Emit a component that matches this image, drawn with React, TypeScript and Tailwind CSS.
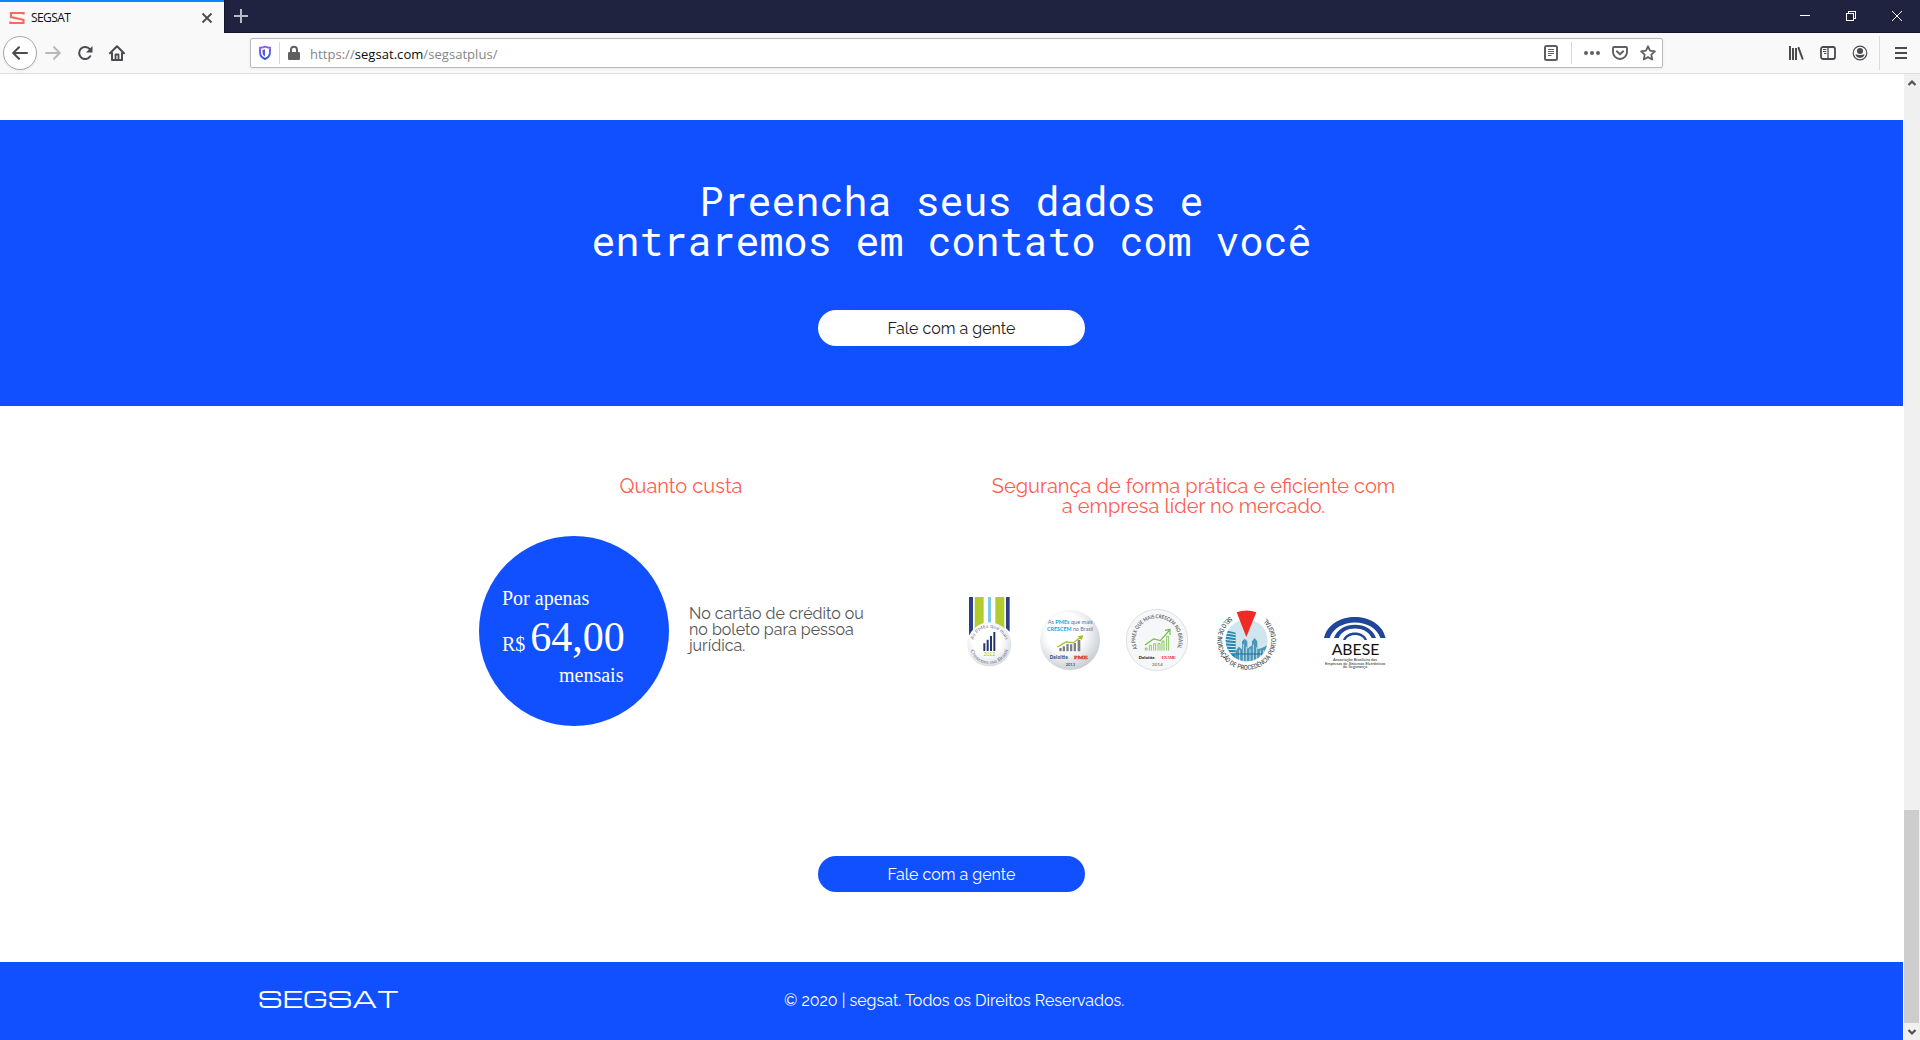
import React from "react";

const SANS = "font-['Raleway','Lato',sans-serif]";

function TabStrip() {
  return (
    <div className="flex h-[33px] bg-[#20233f]">
      <div className="flex h-full w-[224px] items-center border-t-2 border-[#0a84ff] bg-[#f9f9fa] pl-[9px] pr-[11px]">
        <svg width="16" height="16" viewBox="0 0 16 16" fill="none" stroke="#fb6a60" strokeWidth="2.2">
          <path d="M14.6 4.4V3H2v4l12.4 2.8V13H1.4v-1.6" />
        </svg>
        <span className="ml-[6px] flex-1 font-['Open_Sans',sans-serif] text-[12px] leading-[16px] tracking-[-0.6px] text-[#0c0c0d]">
          SEGSAT
        </span>
        <svg width="12" height="12" viewBox="0 0 12 12" stroke="#4a4a4f" strokeWidth="1.8">
          <path d="M1.5 1.5l9 9M10.5 1.5l-9 9" />
        </svg>
      </div>
      <div className="flex flex-1 items-center border-b border-l border-[#14162d] pl-[9px] pr-[17px]">
        <svg width="14" height="14" viewBox="0 0 14 14" stroke="#b9b9c6" strokeWidth="2">
          <path d="M7 0v14M0 7h14" />
        </svg>
        <div className="ml-auto flex items-center gap-[34px]">
          <svg width="12" height="12" viewBox="0 0 12 12" stroke="#fff" shapeRendering="crispEdges">
            <path d="M1 5.5h10" />
          </svg>
          <svg width="12" height="12" viewBox="0 0 12 12" fill="none" stroke="#fff" shapeRendering="crispEdges">
            <path d="M1.5 3.5h7v7h-7zM3.5 3V1.5h7v7H9" />
          </svg>
          <svg width="12" height="12" viewBox="0 0 12 12" stroke="#fff">
            <path d="M1 1l10 10M11 1L1 11" />
          </svg>
        </div>
      </div>
    </div>
  );
}

function AddressBar() {
  return (
    <div className="ml-[125px] flex h-[30px] w-[1413px] shrink-0 items-center rounded-[2px] border border-[#b9b9bb] bg-white pl-[7px] pr-[6px] shadow-[0_1px_3px_rgba(0,0,0,0.06)]">
      <svg width="14" height="16" viewBox="0 0 14 16" fill="none">
        <defs>
          <linearGradient id="shield" x1="0" y1="0" x2="0" y2="1">
            <stop offset="0" stopColor="#9059ff" />
            <stop offset="1" stopColor="#2a5bd0" />
          </linearGradient>
        </defs>
        <path d="M7 1.6c1.8.8 3.4 1 5 1.2V7c0 3.600-1.700 5.700-5 7C3.700 12.700 2 10.600 2 7V2.800c1.600-.2 3.200-.4 5-1.200z" stroke="url(#shield)" strokeWidth="1.9" />
        <path d="M7 4.200c-.9.4-1.700.5-2.500.6V7c0 2.200.8 3.500 2.500 4.600z" fill="#5a55e8" />
      </svg>
      <div className="ml-[7px] h-[22px] w-px bg-[#d7d7db]" />
      <svg className="ml-[8px]" width="12" height="16" viewBox="0 0 12 16">
        <path d="M3 8V4.800a3 3 0 0 1 6 0V8" fill="none" stroke="#5f5f61" strokeWidth="2" />
        <rect x="0" y="7" width="12" height="8" rx="1.300" fill="#5f5f61" />
      </svg>
      <span className="ml-[10px] whitespace-pre pt-[2px] font-['Open_Sans',sans-serif] text-[13px] leading-[18px] tracking-[0.05px] text-[#858587]">
        https://<span className="text-[#0c0c0d]">segsat.com</span>/segsatplus/
      </span>
      <div className="ml-auto flex items-center">
        <svg width="14" height="16" viewBox="0 0 14 16" fill="none" stroke="#5f5f61">
          <rect x="1" y="1" width="12" height="14" rx="1.500" strokeWidth="2" />
          <path d="M4 4.500h6M4 6.500h6M4 8.500h6M4 10.500h3.500" />
        </svg>
        <div className="ml-[13px] h-[22px] w-px bg-[#d7d7db]" />
        <svg className="ml-[12px]" width="16" height="16" viewBox="0 0 16 16" fill="#5f5f61">
          <circle cx="2" cy="8" r="2" />
          <circle cx="8" cy="8" r="2" />
          <circle cx="14" cy="8" r="2" />
        </svg>
        <svg className="ml-[12px]" width="16" height="16" viewBox="0 0 16 16" fill="none" stroke="#5f5f61" strokeWidth="1.900" strokeLinecap="round" strokeLinejoin="round">
          <path d="M2 2h12a1 1 0 0 1 1 1v4a7 7 0 0 1-14 0V3a1 1 0 0 1 1-1z" />
          <path d="M4.800 6.300L8 9.300l3.200-3" />
        </svg>
        <svg className="ml-[12px]" width="16" height="16" viewBox="0 0 16 16" fill="none" stroke="#5f5f61" strokeWidth="1.800" strokeLinejoin="round">
          <path d="M8 1.300l2 4.400 4.900.6-3.600 3.300.9 4.900L8 12.100l-4.200 2.400.9-4.900L1.100 6.300 6 5.700z" />
        </svg>
      </div>
    </div>
  );
}

function Toolbar() {
  return (
    <div className="flex h-[41px] items-center border-b border-[#dcdcdd] bg-[#f9f9fa] pb-px pl-[3px] pr-[12px]">
      <div className="flex size-[34px] shrink-0 items-center justify-center rounded-full border border-[#a9a9ab] bg-white shadow-[0_1px_2px_rgba(0,0,0,0.08)]">
        <svg width="16" height="16" viewBox="0 0 16 16" fill="none" stroke="#4a4a4f" strokeWidth="2" strokeLinecap="round" strokeLinejoin="round">
          <path d="M15 8H1.500M7 2.200L1.200 8 7 13.800" />
        </svg>
      </div>
      <svg className="ml-[8px] shrink-0" width="16" height="16" viewBox="0 0 16 16" fill="none" stroke="#b9b9bb" strokeWidth="2" strokeLinecap="round" strokeLinejoin="round">
        <path d="M1 8h13.500M9 2.200L14.800 8 9 13.800" />
      </svg>
      <svg className="ml-[16px] shrink-0" width="16" height="16" viewBox="0 0 16 16" fill="none" stroke="#4a4a4f" strokeWidth="2">
        <path d="M13.200 11.200A6 6 0 1 1 12.800 4.200" strokeLinecap="round" />
        <path d="M15.500 1v6.500H9z" fill="#4a4a4f" stroke="none" />
      </svg>
      <svg className="ml-[16px] shrink-0" width="16" height="16" viewBox="0 0 16 16" fill="none" stroke="#4a4a4f" strokeWidth="2" strokeLinecap="round" strokeLinejoin="round">
        <path d="M1 8.300L8 1.300l7 7M3 8v7h10V8" />
        <path d="M6.500 14V9.500h3V14" strokeWidth="1.800" />
      </svg>
      <AddressBar />
      <div className="ml-auto flex items-center">
        <svg width="16" height="16" viewBox="0 0 16 16" fill="none" stroke="#4a4a4f" strokeWidth="2">
          <path d="M2 1v14M5 3v12M8 3v12M10.300 2.200l4.500 12.300" />
        </svg>
        <svg className="ml-[16px]" width="16" height="16" viewBox="0 0 16 16" fill="none" stroke="#4a4a4f" strokeWidth="1.800">
          <rect x="1" y="2" width="14" height="12" rx="2" />
          <path d="M8 2v12" strokeWidth="1.300" />
          <path d="M3 4.500h3.300M3 6.500h3.300M4 8.500h2.300" strokeWidth="1" />
        </svg>
        <svg className="ml-[16px]" width="16" height="16" viewBox="0 0 16 16">
          <circle cx="8" cy="8" r="6.800" fill="none" stroke="#4a4a4f" strokeWidth="1.200" />
          <circle cx="8" cy="6" r="3" fill="#4a4a4f" />
          <path d="M3.300 9.600C4.500 9 5.500 9.900 8 9.900s3.500-.9 4.700-.3c-.6 2-2.300 3.300-4.700 3.300s-4.100-1.300-4.700-3.300z" fill="#4a4a4f" />
        </svg>
        <div className="ml-[11px] h-[34px] w-px bg-[#dcdcdd]" />
        <svg className="ml-[14px]" width="14" height="14" viewBox="0 0 14 14" stroke="#4a4a4f" strokeWidth="2">
          <path d="M1 2h12M1 7h12M1 12h12" />
        </svg>
      </div>
    </div>
  );
}

function Medal2012() {
  return (
    <svg width="46" height="73" viewBox="50 48 138 219">
      <defs>
        <radialGradient id="medal" cx=".45" cy=".4" r=".6">
          <stop offset=".55" stopColor="#fff" />
          <stop offset="1" stopColor="#d9dde0" />
        </radialGradient>
        <path id="medalTop" d="M67 193a50 50 0 0 1 100 0" />
        <path id="medalBottom" d="M58 193a59 59 0 0 0 118 0" />
      </defs>
      <path d="M55 51h124v98q-62-40-124 16z" fill="#fff" />
      <path d="M56 51h12v106l-12 9zM167 51h11v104l-11-10z" fill="#2b3f86" />
      <path d="M73 51h27v82l-27 20zM135 51h27v100l-27-18z" fill="#b1cc2c" />
      <path d="M113 51h9v80h-9z" fill="#7fc9e8" />
      <circle cx="117" cy="193" r="66" fill="url(#medal)" />
      <path d="M99 190h6v23h-6zM109 179h6v34h-6zM119 168h6v45h-6zM129 156h6v57h-6z" fill="#24366f" />
      <g className="font-['Lato',sans-serif]" fill="#6d7690" fontSize="14">
        <text><textPath href="#medalTop" startOffset="50%" textAnchor="middle" textLength="130" lengthAdjust="spacingAndGlyphs">As PMEs que mais</textPath></text>
        <text><textPath href="#medalBottom" startOffset="50%" textAnchor="middle" textLength="150" lengthAdjust="spacingAndGlyphs">Crescem no Brasil</textPath></text>
        <text x="117" y="228" textAnchor="middle" fontSize="15" fill="#8fbf21">2012</text>
      </g>
    </svg>
  );
}

function BadgePME() {
  return (
    <svg width="62" height="62" viewBox="267 87 186 186">
      <defs>
        <radialGradient id="pme" cx=".42" cy=".38" r=".62">
          <stop offset=".5" stopColor="#fff" />
          <stop offset="1" stopColor="#cbd0d4" />
        </radialGradient>
      </defs>
      <circle cx="360" cy="180" r="90" fill="url(#pme)" />
      <g className="font-['Lato',sans-serif]" fontSize="18" fill="#5a6ba5">
        <text x="293" y="133" textLength="135" lengthAdjust="spacingAndGlyphs">
          As <tspan fill="#12a5dc" fontWeight="700">PMEs</tspan> que mais
        </text>
        <text x="291" y="153" textLength="138" lengthAdjust="spacingAndGlyphs">
          <tspan fill="#12a5dc" fontWeight="700">CRESCEM</tspan> no Brasil
        </text>
      </g>
      <path d="M328 204h7v10h-7zM338 199h7v15h-7zM349 192h7v22h-7zM360 193h7v21h-7zM371 189h7v25h-7zM383 180h8v34h-8z" fill="#7c8186" />
      <path d="M322 201l26-15 22 2 22-16" fill="none" stroke="#a5be28" strokeWidth="4" />
      <path d="M400 166l-5 15-12-12z" fill="#a5be28" />
      <text x="299" y="236" textLength="58" className="font-['Lato',sans-serif]" fontSize="14" fontWeight="900" fill="#1d4f8c">Deloitte<tspan fill="#8fbf21">.</tspan></text>
      <text x="372" y="236" textLength="42" lengthAdjust="spacingAndGlyphs" className="font-['Liberation_Serif',serif]" fontSize="15" fontWeight="700" fill="#e2372f" stroke="#e2372f" strokeWidth=".8">PME</text>
      <text x="361" y="259" textAnchor="middle" className="font-['Lato',sans-serif]" fontSize="12" fontWeight="700" fill="#3f5a7d">2013</text>
    </svg>
  );
}

function BadgeExame() {
  return (
    <svg width="64" height="64" viewBox="525 84 192 192">
      <defs>
        <path id="exameArc" d="M566 214A65 65 0 1 1 678 211" />
      </defs>
      <circle cx="621" cy="180" r="92" fill="#f6f7f8" stroke="#dfe1e3" strokeWidth="3" />
      <text className="font-['Lato',sans-serif]" fontSize="16" fontWeight="700" fill="#63666a">
        <textPath href="#exameArc" startOffset="50%" textAnchor="middle" textLength="256" lengthAdjust="spacingAndGlyphs">AS PMEX QUE MAIS CRESCEM NO BRASIL</textPath>
      </text>
      <g fill="none" stroke="#78bd4b">
        <path d="M586 212v-8h5v8M598 212v-16h6v16M611 212v-21h6v21M624 212v-21h6v21M636 212v-29h6v29M650 212v-43h6v43" strokeWidth="2.500" />
        <path d="M585 195l26-18 20 5 28-32M645 151l15-3v17" strokeWidth="3.500" />
      </g>
      <g className="font-['Lato',sans-serif]" fontWeight="900" fontSize="13">
        <text x="566" y="237" textLength="51" fill="#222">Deloitte<tspan fill="#8fbf21">.</tspan></text>
        <text x="635" y="237" textLength="43" className="font-['Liberation_Serif',serif]" fill="#e5323b">EXAME</text>
        <text x="622" y="259" textAnchor="middle" fontSize="13" fontWeight="400" fill="#444" textLength="32">2014</text>
      </g>
    </svg>
  );
}

function BadgePortoDigital() {
  return (
    <svg width="64" height="64" viewBox="76 84 192 192">
      <defs>
        <path id="portoRing" d="M121 109A88 88 0 1 0 221 109" />
        <clipPath id="portoDisc"><circle cx="171" cy="181" r="63" /></clipPath>
      </defs>
      <circle cx="171" cy="181" r="63" fill="#cfe6ee" />
      <g clipPath="url(#portoDisc)">
        <path d="M106 150l32 8v90h-32z" fill="#2b85ac" />
        <path d="M104 158l34 6M104 168l34 5M104 178l34 4M104 188l34 3M104 198l34 2M104 208l34 1M104 218h34" stroke="#e3f2f7" strokeWidth="3" />
        <path d="M138 214l9-14 10 8v-24l8-8 8 8v22l14-10v-12l8-10 8 10v24l14-4 18-10v54h-97z" fill="#4e96b8" />
        <path d="M150 210v34M161 192v52M170 200v44M181 206v38M191 194v50M201 202v42M212 212v32M222 210v34" stroke="#bcdde9" strokeWidth="3" />
        <path d="M138 222h96" stroke="#226f97" strokeWidth="3" />
      </g>
      <path d="M141 97q30-11 59 0l-30 74z" fill="#ef2b25" />
      <text className="font-['Roboto_Condensed','Roboto',sans-serif]" fontSize="20" fill="#333a3f">
        <textPath href="#portoRing" startOffset="0" textLength="436" lengthAdjust="spacing">SELO DE INDICAÇÃO DE PROCEDÊNCIA PORTO DIGITAL</textPath>
      </text>
    </svg>
  );
}

function BadgeAbese() {
  return (
    <svg width="64" height="54" viewBox="399 108 192 162">
      <g fill="#1f4698">
        <path d="M402 174C421 90 568 90 587 174H571C550 112 440 112 419 174z" />
        <path d="M432 174C449 121 541 121 558 174H545C529 136 461 136 446 174z" />
        <path d="M459 180C468 150 522 150 531 180L524 180C513 160 478 160 466 180z" />
      </g>
      <g className="font-['Lato',sans-serif]" fill="#111">
        <text x="425" y="225" fontSize="47" textLength="143" lengthAdjust="spacingAndGlyphs">ABESE</text>
        <g fontSize="11" fill="#222">
          <text x="429" y="242" textLength="132" lengthAdjust="spacingAndGlyphs">Associação Brasileira das</text>
          <text x="405" y="254" textLength="181" lengthAdjust="spacingAndGlyphs">Empresas de Sistemas Eletrônicos</text>
          <text x="459" y="265" textLength="73" lengthAdjust="spacingAndGlyphs">de Segurança</text>
        </g>
      </g>
    </svg>
  );
}

function Hero() {
  return (
    <section className="flex h-[286px] flex-col items-center bg-[#1050ff] pt-[61px]">
      <h2 className="text-center font-['Roboto_Mono','DejaVu_Sans_Mono',monospace] text-[40px] leading-[40px] text-white">
        Preencha seus dados e
        <br />
        entraremos em contato com você
      </h2>
      <button className={`mt-[49px] h-[36px] w-[267px] rounded-full bg-white pt-[2px] text-[16px] leading-[34px] text-[#222] ${SANS}`}>
        Fale com a gente
      </button>
    </section>
  );
}

function Pricing() {
  return (
    <section className={`h-[556px] pt-[70px] ${SANS}`}>
      <div className="ml-[425px] grid w-[1024px] grid-cols-2">
        <div>
          <h3 className="text-center text-[20px] leading-[20px] text-[#ff5c4e]">Quanto custa</h3>
          <div className="mt-[40px] flex pl-[54px]">
            <div className="size-[190px] shrink-0 rounded-full bg-[#1050ff] pl-[23px] pt-[50px] font-['Liberation_Serif',serif] text-[20px] text-white">
              <p className="leading-[24px]">Por apenas</p>
              <p className="mt-[6px] h-[42px] leading-[42px]">
                R$ <span className="text-[42px]">64,00</span>
              </p>
              <p className="mt-[5px] pl-[57px] leading-[24px]">mensais</p>
            </div>
            <p className="ml-[20px] mt-[70px] whitespace-nowrap text-[16px] leading-[16px] text-[#555]">
              No cartão de crédito ou
              <br />
              no boleto para pessoa
              <br />
              jurídica.
            </p>
          </div>
        </div>
        <div>
          <h3 className="whitespace-nowrap pl-px text-center text-[20px] leading-[20px] text-[#ff5c4e]">
            Segurança de forma prática e eficiente com
            <br />
            a empresa líder no mercado.
          </h3>
          <div className="mt-[80px] flex items-start pl-[30px]">
            <Medal2012 />
            <div className="ml-[26px] mt-[13px]"><BadgePME /></div>
            <div className="ml-[24px] mt-[12px]"><BadgeExame /></div>
            <div className="ml-[26px] mt-[12px]"><BadgePortoDigital /></div>
            <div className="ml-[44px] mt-[20px]"><BadgeAbese /></div>
          </div>
        </div>
      </div>
      <div className="mt-[130px] flex justify-center">
        <button className="h-[36px] w-[267px] rounded-full bg-[#1050ff] pt-[2px] text-[16px] leading-[34px] text-white">Fale com a gente</button>
      </div>
    </section>
  );
}

function Footer() {
  return (
    <footer className="flex h-[78px] items-start bg-[#1050ff] text-white">
      <svg className="ml-[258px] mt-[19px]" width="144" height="40" viewBox="0 0 144 40">
        <text x="0" y="27.300" fontSize="22.800" fill="#fff" textLength="141" lengthAdjust="spacingAndGlyphs" className="font-['Michroma','Orbitron','Share_Tech_Mono','DejaVu_Sans_Mono',monospace]">
          SEGSAT
        </text>
      </svg>
      <p className={`ml-[382px] mt-[29px] whitespace-nowrap text-[16px] leading-[20px] ${SANS}`}>
        © 2020 | segsat. Todos os Direitos Reservados.
      </p>
    </footer>
  );
}

function Scrollbar() {
  return (
    <div className="flex w-[16px] flex-col items-center bg-[#f0f0f0]">
      <svg className="mt-[4px]" width="10" height="10" viewBox="0 0 10 10" fill="none" stroke="#505050" strokeWidth="2.200">
        <path d="M1.500 7L5 3.500 8.500 7" />
      </svg>
      <div className="mr-px mt-auto h-[213px] w-[15px] bg-[#cdcdcd]" />
      <svg className="mb-[3px] mt-[4px]" width="10" height="10" viewBox="0 0 10 10" fill="none" stroke="#505050" strokeWidth="2.200">
        <path d="M1.500 3L5 6.500 8.500 3" />
      </svg>
    </div>
  );
}

export default function App() {
  return (
    <div className="flex h-[1040px] w-[1920px] flex-col overflow-hidden bg-white">
      <TabStrip />
      <Toolbar />
      <div className="flex flex-1">
        <main className="mr-px w-[1903px] shrink-0 pt-[46px]">
          <Hero />
          <Pricing />
          <Footer />
        </main>
        <Scrollbar />
      </div>
    </div>
  );
}
